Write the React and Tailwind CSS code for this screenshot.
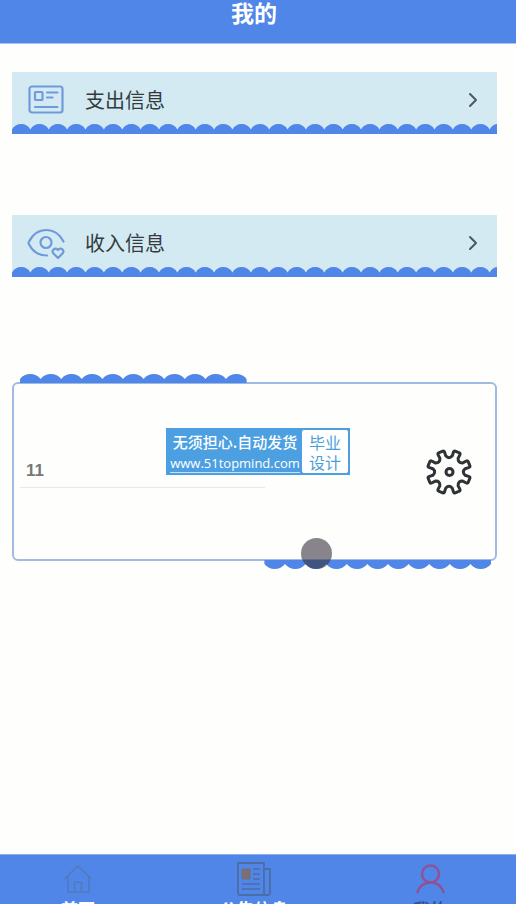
import { useState } from 'react';
import { ChevronRight } from 'lucide-react';

function Scallops({ count, step, rise, depth, className }) {
    const radius = (step * step / 4 + rise * rise) / (2 * rise);
    const arcs = Array.from({ length: count }, () => `a${radius} ${radius} 0 0 1 ${step} 0`).join('');
    return (
        <svg className={className} fill="#4f86e7" aria-hidden="true">
            <path d={`M0 ${depth}V${rise}${arcs}V${depth}Z`} />
        </svg>
    );
}

function CardIcon() {
    return (
        <svg viewBox="0 0 40 32" className="w-10 h-8" fill="none" stroke="#6f9bdc" strokeWidth="2.2" strokeLinecap="round">
            <rect x="3.5" y="2.500" width="33" height="26" rx="2.5" />
            <rect x="9" y="8" width="7.5" height="8" rx="0.8" />
            <path d="M21 8.500h10.500M21 13.500h5.500M9 23h22.500" />
        </svg>
    );
}

function EyeHeartIcon() {
    return (
        <svg viewBox="0 0 40 32" className="w-10 h-8" fill="none" stroke="#6f9bdc" strokeWidth="2.2" strokeLinecap="round" strokeLinejoin="round">
            <path d="M37.500 14.500C33.500 7 27.500 3 20.500 3C13 3 6.500 7.500 2.800 15Q2.300 16 2.800 17C6.500 24.500 13 28.500 21 28.500" />
            <circle cx="20" cy="15.500" r="5.500" />
            <path d="M32 31L27.500 26.500C25 23.500 29 19.500 32 23C35 19.500 39 23.500 36.500 26.500Z" />
        </svg>
    );
}

function polar(r, deg) {
    const a = (deg * Math.PI) / 180;
    return `${(24 + r * Math.cos(a)).toFixed(2)} ${(24 + r * Math.sin(a)).toFixed(2)}`;
}

function GearIcon() {
    const teeth = Array.from({ length: 8 }, (_, i) => {
        const a = i * 45 + 22.5;
        return `${i ? 'L' : 'M'}${polar(16.5, a - 11)}L${polar(20, a - 10)}Q${polar(22, a - 9.5)} ${polar(21.8, a - 6)}L${polar(21.8, a + 6)}Q${polar(22, a + 9.5)} ${polar(20, a + 10)}L${polar(16.5, a + 11)}Q${polar(12.5, a + 22.5)} ${polar(16.5, a + 34)}`;
    }).join('');
    return (
        <svg viewBox="0 0 48 48" className="size-12" fill="none" stroke="#2f3236" strokeWidth="3" strokeLinejoin="round">
            <path d={`${teeth}Z`} />
            <circle cx="24.500" cy="24" r="3.5" />
        </svg>
    );
}

function HomeIcon() {
    return (
        <svg viewBox="0 0 36 36" className="size-9 shrink-0" fill="none" stroke="#5479bd" strokeWidth="1.6" strokeLinejoin="round" strokeLinecap="round">
            <path d="M5 17.500L18 5L31 17.500M8 15V31H29V15M14.500 31V21H21.500V31" />
        </svg>
    );
}

function NewsIcon() {
    return (
        <svg viewBox="0 0 36 36" className="size-9 shrink-0" fill="none" stroke="#4d6da5" strokeWidth="1.8" strokeLinejoin="round">
            <path d="M2 2H28V34H4Q2 34 2 32ZM28 8H34V32Q34 34 32 34H28" />
            <path d="M17 8H24M17 13H24M17 18H24M6 23H24M6 28H24" strokeWidth="1.3" />
            <rect x="6" y="8" width="8" height="10" fill="#7d6f70" stroke="#6e6e82" strokeWidth="1" />
        </svg>
    );
}

function UserIcon() {
    return (
        <svg viewBox="0 0 36 36" className="size-9 shrink-0" fill="none" stroke="#94508f" strokeWidth="2.4" strokeLinecap="round">
            <circle cx="18.500" cy="13" r="8.500" />
            <path d="M5.500 31C7.500 25 12.500 21.500 18.500 21.500S29.500 25 31.500 31" />
        </svg>
    );
}

function MenuRow({ icon, label }) {
    return (
        <a href="#" className="block bg-[#d3eaf2] text-[#333b3f]">
            <div className="flex items-center h-[52px] pt-1 pl-3.5 pr-3">
                {icon}
                <span className="ml-[19px] flex-1 text-xl">{label}</span>
                <ChevronRight size={24} strokeWidth={2} className="text-[#4c5960]" />
            </div>
            <Scallops count={120} step={18.37} rise={5.5} depth={10} className="block w-full h-2.5" />
        </a>
    );
}

const tabs = [
    { label: '首页', icon: <HomeIcon />, color: 'text-white' },
    { label: '公告信息', icon: <NewsIcon />, color: 'text-white' },
    { label: '我的', icon: <UserIcon />, color: 'text-[#31548f]' },
];

export default function App() {
    const [name, setName] = useState('11');

    return (
        <div className="h-screen flex flex-col overflow-hidden bg-[#fefefc] font-['Noto_Sans_CJK_SC',sans-serif]">
            <header className="shrink-0 h-11 pr-2 bg-[#4f86e7] border-b border-[#a9c4f0] text-center text-white">
                <h1 className="text-[23px] leading-6 font-bold">我的</h1>
            </header>

            <main className="flex-1 min-h-0 pt-7 pl-3 pr-[19px]">
                <div className="flex flex-col gap-[81px]">
                    <MenuRow icon={<CardIcon />} label="支出信息" />
                    <MenuRow icon={<EyeHeartIcon />} label="收入信息" />
                </div>

                <section className="relative mt-[105px] h-[179px] flex items-center justify-between border-2 border-[#9dbbe3] rounded-md pl-1.5 pr-[22px]">
                    <Scallops count={11} step={20.6} rise={5} depth={9} className="absolute left-1.5 -top-2.5 w-[227px] h-[9px]" />
                    <Scallops count={11} step={20.6} rise={5} depth={9} className="absolute right-1 -bottom-2.5 w-[227px] h-[9px] rotate-180" />

                    <input
                        type="text"
                        aria-label="用户名"
                        value={name}
                        onChange={(e) => setName(e.target.value)}
                        className="w-[245px] h-8 px-1.5 border-b border-[#e8e8e8] font-['Liberation_Sans',sans-serif] text-[17px] font-bold text-[#77777a] outline-none"
                    />
                    <button type="button" aria-label="设置">
                        <GearIcon />
                    </button>

                    <div className="absolute left-[152px] top-11 flex w-[184px] h-[47px] p-0.5 bg-[#4c9fe0] text-white">
                        <div className="flex-1 min-w-0 flex flex-col items-center justify-center whitespace-nowrap">
                            <span className="text-[15px] leading-6 font-medium">无须担心.自动发货</span>
                            <a href="#" className="font-['Open_Sans',sans-serif] text-[13px] leading-[18px] font-medium border-b border-white/70">www.51topmind.com</a>
                        </div>
                        <div className="shrink-0 w-[46px] rounded-xs bg-white text-center text-base leading-5 text-[#4c9fd6] pt-0.5">
                            毕业<br />设计
                        </div>
                    </div>

                    <span className="absolute left-[287px] -bottom-2.5 size-[31px] rounded-full bg-[#373440]/60" />
                </section>
            </main>

            <nav className="shrink-0 h-[50px] overflow-hidden flex justify-between pl-3.5 pr-[22px] bg-[#4f86e7] border-t border-[#8fb0ea]">
                {tabs.map((tab) => (
                    <a key={tab.label} href="#" className={`w-32 pt-1.5 flex flex-col items-center ${tab.color}`}>
                        {tab.icon}
                        <span className="shrink-0 text-[17px] leading-6 font-bold">{tab.label}</span>
                    </a>
                ))}
            </nav>
        </div>
    );
}
